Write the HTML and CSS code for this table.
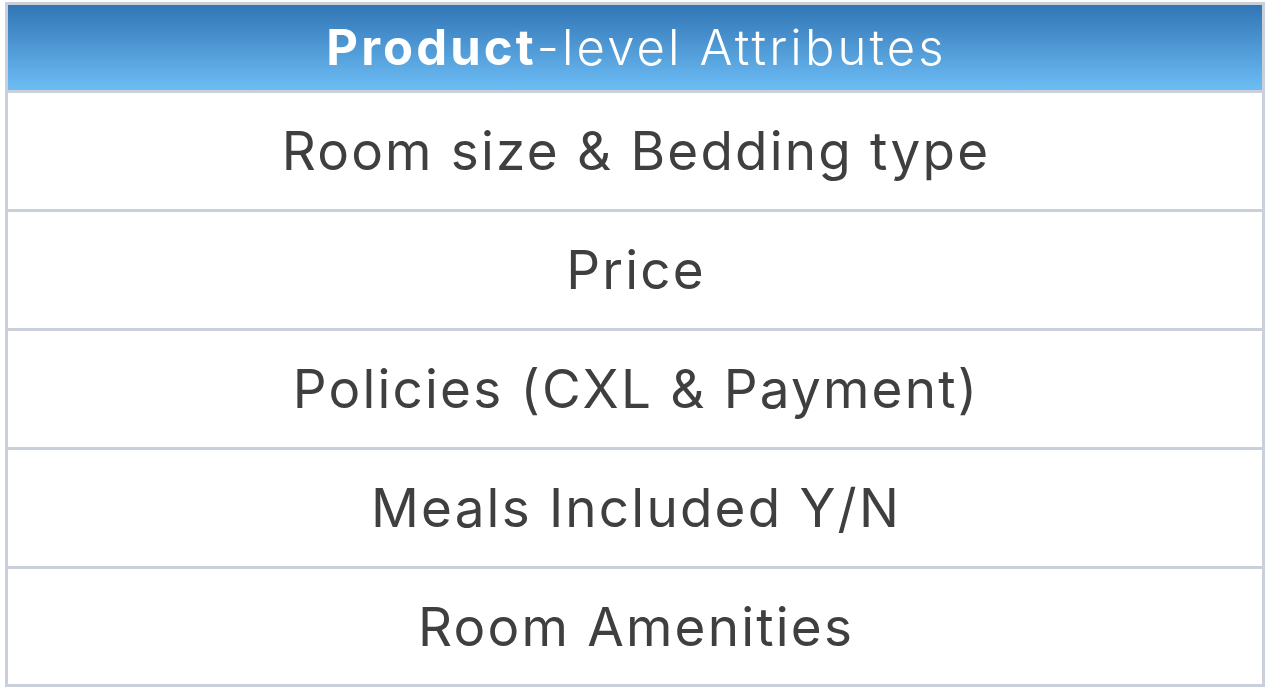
FILE: index.html
```html
<!DOCTYPE html>
<html lang="en">
<head>
<meta charset="utf-8">
<title>Product-level Attributes</title>
<link rel="stylesheet" href="styles.css">
</head>
<body>
<div class="table">
  <div class="head"><span class="bold">Product</span>-level Attributes</div>
  <div class="row">Room size &amp; Bedding type</div>
  <div class="row">Price</div>
  <div class="row">Policies (CXL &amp; Payment)</div>
  <div class="row">Meals Included Y/N</div>
  <div class="row last">Room Amenities</div>
</div>
</body>
</html>
```
FILE: styles.css
```css
html, body {
  margin: 0;
  background: #ffffff;
}
body {
  padding: 2px 0 0 5px;
  font-family: Inter, "Open Sans", sans-serif;
}
.table {
  width: 1254px;
  border: 3px solid #c9d0d9;
  display: flex;
  flex-direction: column;
}
.head {
  height: 85px;
  display: flex;
  align-items: center;
  justify-content: center;
  padding-left: 3px;
  background: linear-gradient(#3175b5, #6dbdf5);
  color: #ffffff;
  font-size: 49px;
  font-weight: 300;
  letter-spacing: 3.1px;
  border-bottom: 3px solid #c9d0d9;
}
.bold {
  font-weight: 700;
}
.row {
  height: 116px;
  display: flex;
  align-items: center;
  justify-content: center;
  padding-left: 2px;
  color: #3f3f3f;
  font-size: 53px;
  font-weight: 400;
  letter-spacing: 2.2px;
  border-bottom: 3px solid #c9d0d9;
}
.row.last {
  height: 115px;
  border-bottom: none;
}
```
